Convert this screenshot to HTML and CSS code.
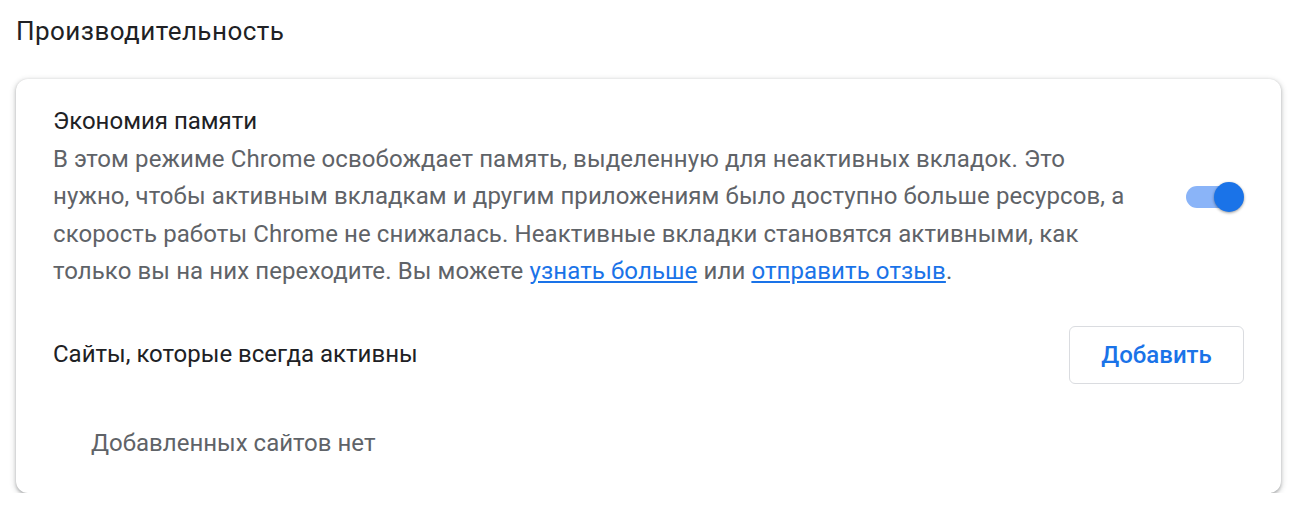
FILE: index.html
```html
<!DOCTYPE html>
<html lang="ru">
<head>
<meta charset="utf-8">
<title>Производительность</title>
<link rel="stylesheet" href="styles.css">
</head>
<body>
<main class="page">
  <h2 class="section-title">Производительность</h2>
  <section class="card">
    <div class="row row-main">
      <div class="row-text">
        <div class="label">Экономия памяти</div>
        <div class="secondary">В этом режиме Chrome освобождает память, выделенную для неактивных вкладок. Это нужно, чтобы активным вкладкам и другим приложениям было доступно больше ресурсов, а скорость работы Chrome не снижалась. Неактивные вкладки становятся активными, как только вы на них переходите. Вы можете <a href="#" class="link">узнать больше</a> или <a href="#" class="link">отправить отзыв</a>.</div>
      </div>
      <div class="toggle" role="switch" aria-checked="true">
        <span class="toggle-bar"></span>
        <span class="toggle-knob"></span>
      </div>
    </div>
    <div class="row row-sites">
      <div class="label">Сайты, которые всегда активны</div>
      <button class="btn">Добавить</button>
    </div>
    <div class="empty">Добавленных сайтов нет</div>
  </section>
</main>
</body>
</html>
```

FILE: styles.css
```css
html, body {
  margin: 0;
  padding: 0;
  background: #ffffff;
}

body {
  font-family: Roboto, "Liberation Sans", Arial, sans-serif;
  color: #202124;
  -webkit-font-smoothing: antialiased;
}

.page {
  padding: 12px 19px 0 16px;
}

.section-title {
  margin: 0;
  font-size: 26px;
  font-weight: 400;
  line-height: 38px;
  color: #202124;
  letter-spacing: 0.45px;
}

.card {
  margin-top: 29px;
  background: #ffffff;
  border-radius: 12px;
  box-shadow: 0 1.5px 3px 0 rgba(60, 64, 67, 0.3), 0 1.5px 5px 1.5px rgba(60, 64, 67, 0.15);
  padding: 24px 37px 31px 37px;
}

.row {
  display: flex;
  align-items: center;
}

.row-text {
  flex: 1;
  padding-right: 58px;
}

.label {
  font-size: 24px;
  line-height: 37.5px;
  color: #202124;
}

.secondary {
  font-size: 24px;
  line-height: 37.5px;
  letter-spacing: 0.1px;
  color: #5f6368;
}

.link {
  color: #1a73e8;
  text-decoration: underline;
}

.toggle {
  position: relative;
  width: 58px;
  height: 30px;
  flex: none;
}

.toggle-bar {
  position: absolute;
  left: 0;
  top: 4px;
  width: 51px;
  height: 22px;
  border-radius: 11px;
  background: #8ab4f8;
}

.toggle-knob {
  position: absolute;
  right: 0;
  top: 0;
  width: 30px;
  height: 30px;
  border-radius: 50%;
  background: #1a73e8;
  box-shadow: 0 1px 3px rgba(0, 0, 0, 0.4);
}

.row-sites {
  justify-content: space-between;
  margin-top: 35px;
}

.btn {
  width: 175px;
  height: 58px;
  border: 1px solid #dadce0;
  border-radius: 6px;
  background: #ffffff;
  color: #1a73e8;
  font-family: Roboto, "Liberation Sans", Arial, sans-serif;
  font-size: 24px;
  font-weight: 500;
  padding: 0;
  cursor: pointer;
}

.empty {
  margin-top: 41px;
  padding-left: 38px;
  font-size: 24px;
  line-height: 37.5px;
  color: #5f6368;
}
```
